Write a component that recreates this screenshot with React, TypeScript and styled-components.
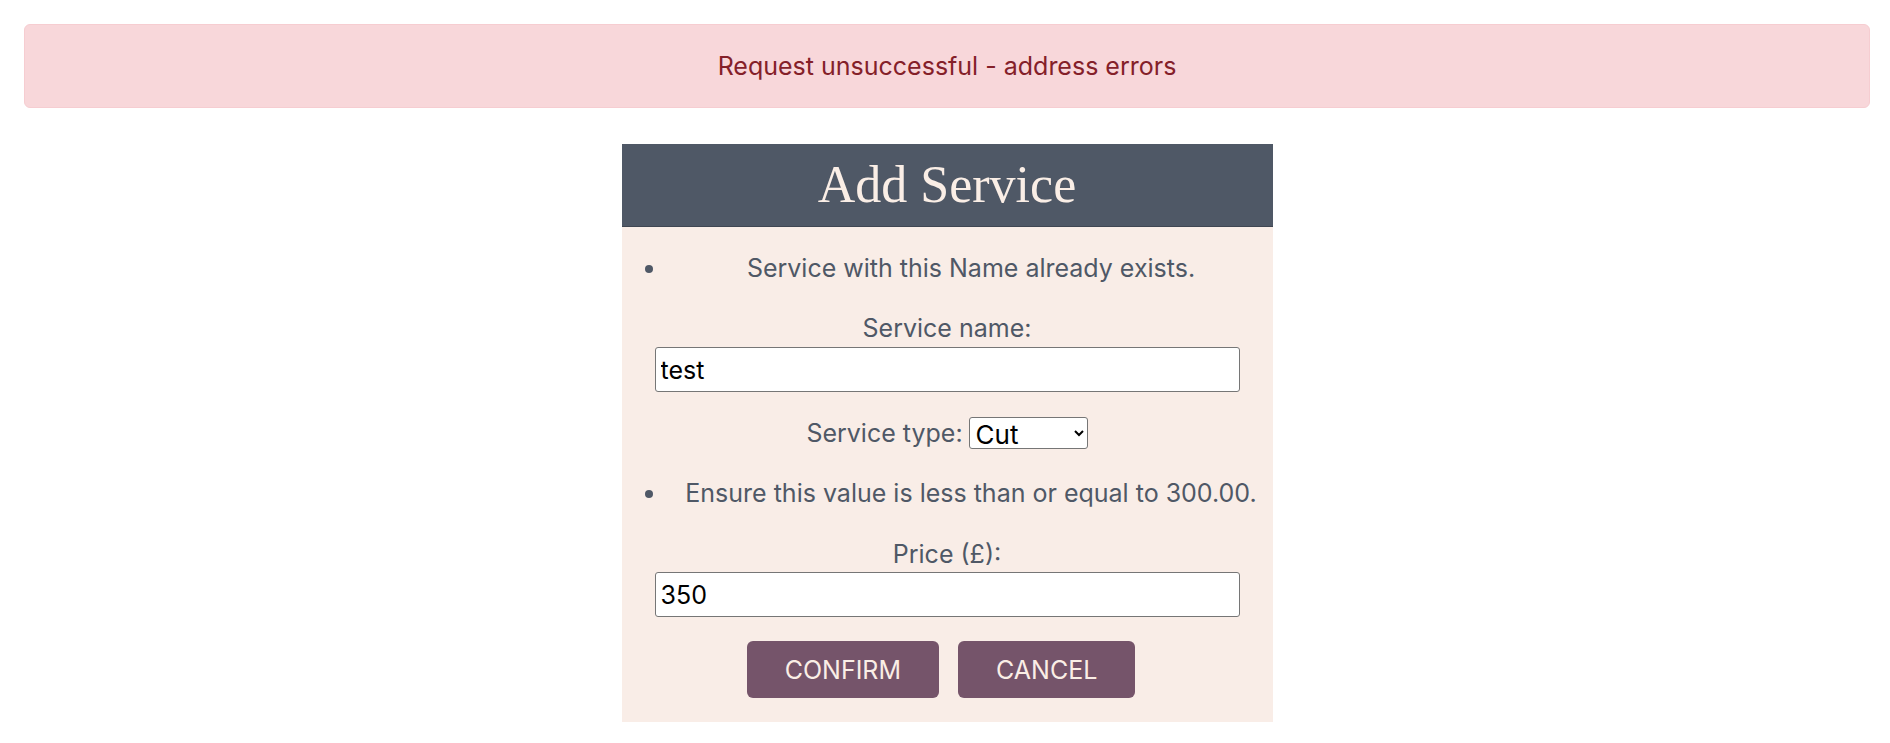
import React from "react";
import styled, { createGlobalStyle } from "styled-components";

const GlobalStyle = createGlobalStyle`
  body {
    margin: 8px;
    background: #ffffff;
    font-family: "Inter", "Open Sans", sans-serif;
  }
`;

const Page = styled.div`
  padding: 16px 12px 16px 16px;
`;

const Alert = styled.div`
  background: #f8d7da;
  color: #842029;
  border: 1px solid #f6cdd1;
  border-radius: 6px;
  text-align: center;
  font-size: 25px;
  line-height: 30px;
  padding: 26px 16px;
`;

const Card = styled.section`
  width: 651px;
  margin: 36px auto 0;
  background: #f9ede7;
  color: #4f5866;
`;

const Header = styled.header`
  height: 83px;
  box-sizing: border-box;
  background: #4f5866;
  border-bottom: 1px solid #3f4652;
  display: flex;
  align-items: center;
  justify-content: center;
`;

const Title = styled.h1`
  margin: 0;
  font-family: "Liberation Serif", "Times New Roman", serif;
  font-weight: 400;
  font-size: 52px;
  line-height: 1;
  color: #faeee6;
`;

const Form = styled.form`
  display: flex;
  flex-direction: column;
  align-items: center;
  padding-bottom: 24px;
  font-size: 25px;
  line-height: 30px;
`;

const ErrorList = styled.ul<{ $top: number }>`
  align-self: stretch;
  margin: ${(p) => p.$top}px -2px 0 0;
  padding: 0 0 0 46px;
  text-align: center;
  list-style: disc;
`;

const Label = styled.label<{ $top: number }>`
  display: block;
  margin-top: ${(p) => p.$top}px;
`;

const TextInput = styled.input<{ $top: number }>`
  display: block;
  box-sizing: border-box;
  width: 585px;
  height: 45px;
  margin-top: ${(p) => p.$top}px;
  padding: 0 5px;
  border: 1px solid #767676;
  border-radius: 3px;
  background: #ffffff;
  font-family: inherit;
  font-size: 25px;
  color: #000000;
`;

const TypeRow = styled.div`
  display: flex;
  align-items: center;
  gap: 6px;
  height: 32px;
  margin-top: 25px;
`;

const Select = styled.select`
  box-sizing: border-box;
  width: 119px;
  height: 32px;
  padding: 0 2px;
  border: 1px solid #767676;
  border-radius: 3px;
  background: #ffffff;
  font-family: inherit;
  font-size: 26px;
  color: #000000;
`;

const ButtonRow = styled.div`
  display: flex;
  gap: 19px;
  margin-top: 24px;
  padding-right: 12px;
`;

const Button = styled.button`
  height: 57px;
  padding: 0 38px;
  border: none;
  border-radius: 6px;
  background: #75546a;
  color: #faeee6;
  font-family: inherit;
  font-size: 25px;
  text-transform: uppercase;
  cursor: pointer;
`;

export default function App() {
  return (
    <>
      <GlobalStyle />
      <Page>
        <Alert>Request unsuccessful - address errors</Alert>
        <Card>
          <Header>
            <Title>Add Service</Title>
          </Header>
          <Form onSubmit={(e) => e.preventDefault()}>
            <ErrorList $top={26}>
              <li>Service with this Name already exists.</li>
            </ErrorList>
            <Label $top={30} htmlFor="name">Service name:</Label>
            <TextInput $top={4} id="name" type="text" defaultValue="test" />
            <TypeRow>
              <label htmlFor="type">Service type:</label>
              <Select id="type" defaultValue="Cut">
                <option>Cut</option>
                <option>Colour</option>
                <option>Style</option>
              </Select>
            </TypeRow>
            <ErrorList $top={29}>
              <li>Ensure this value is less than or equal to 300.00.</li>
            </ErrorList>
            <Label $top={31} htmlFor="price">Price (£):</Label>
            <TextInput $top={3} id="price" type="text" defaultValue="350" />
            <ButtonRow>
              <Button type="submit">Confirm</Button>
              <Button type="button">Cancel</Button>
            </ButtonRow>
          </Form>
        </Card>
      </Page>
    </>
  );
}
